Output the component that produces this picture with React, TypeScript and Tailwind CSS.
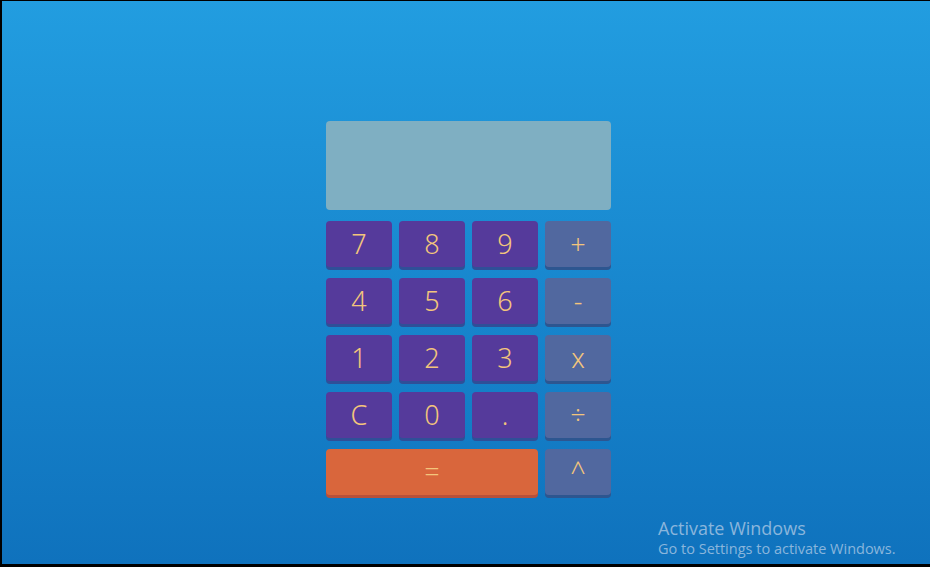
import React from "react";

type Key = { label: string; kind: "num" | "op" | "eq"; wide?: boolean };

const KEYS: Key[] = [
  { label: "7", kind: "num" },
  { label: "8", kind: "num" },
  { label: "9", kind: "num" },
  { label: "+", kind: "op" },
  { label: "4", kind: "num" },
  { label: "5", kind: "num" },
  { label: "6", kind: "num" },
  { label: "-", kind: "op" },
  { label: "1", kind: "num" },
  { label: "2", kind: "num" },
  { label: "3", kind: "num" },
  { label: "x", kind: "op" },
  { label: "C", kind: "num" },
  { label: "0", kind: "num" },
  { label: ".", kind: "num" },
  { label: "÷", kind: "op" },
  { label: "=", kind: "eq", wide: true },
  { label: "^", kind: "op" },
];

const KIND_STYLE: Record<Key["kind"], string> = {
  num: "bg-[#553a9b] shadow-[0_3px_0_#2f4f98]",
  op: "bg-[#51689f] shadow-[0_3px_0_#2d5690]",
  eq: "bg-[#d9663c] shadow-[0_3px_0_#b8503a]",
};

export default function App() {
  return (
    <div className="h-[567px] w-[930px] overflow-hidden border-t border-l-2 border-b-[3px] border-black">
      <div className="relative flex h-full flex-col items-center bg-gradient-to-b from-[#229de0] to-[#0f72bd] pl-[5px] pt-[120px]">
        <div className="flex w-[285px] flex-col gap-[11px]">
          <div className="h-[89px] rounded-[4px] bg-[#7fafc2]" />
          <div className="grid grid-cols-4 gap-x-[7px] gap-y-[11px]">
            {KEYS.map((k) => (
              <button
                key={k.label}
                className={`flex h-[46px] items-center justify-center rounded-[4px] text-[27px] font-light text-[#f3c57c] ${KIND_STYLE[k.kind]} ${k.wide ? "col-span-3" : ""}`}
                style={{ fontFamily: "'Noto Sans', 'Open Sans', sans-serif" }}
              >
                {k.label}
              </button>
            ))}
          </div>
        </div>

        <div
          className="absolute left-[656px] top-[516px] leading-tight text-[#8ab6dc]"
          style={{ fontFamily: "'Open Sans', 'Noto Sans', sans-serif" }}
        >
          <div className="text-[18px]">Activate Windows</div>
          <div className="text-[14.5px]">Go to Settings to activate Windows.</div>
        </div>
      </div>
    </div>
  );
}
